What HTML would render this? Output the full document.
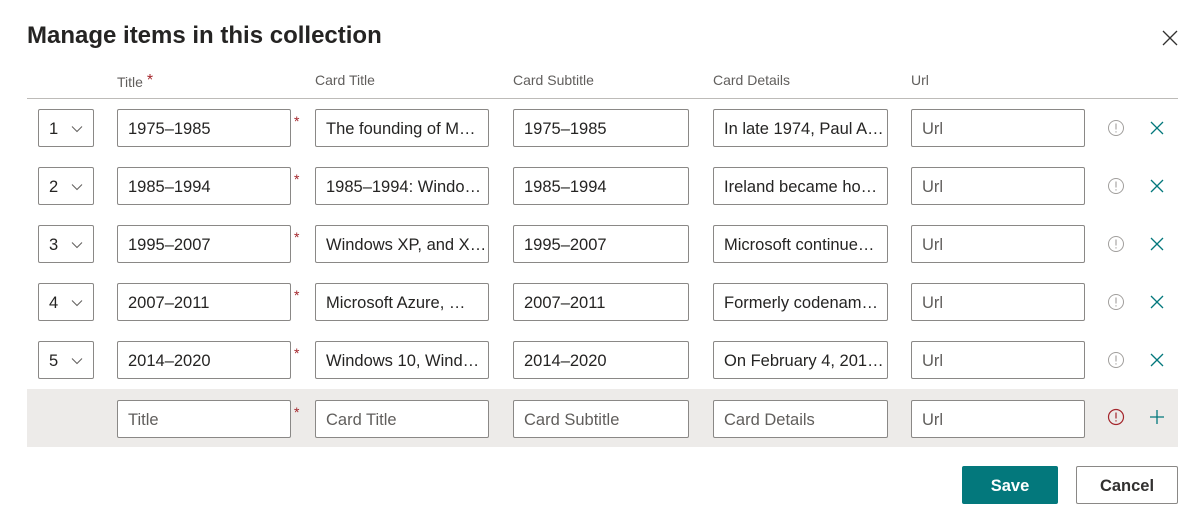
<!DOCTYPE html>
<html><head><style>
*{box-sizing:border-box;margin:0;padding:0}
body{width:1200px;height:523px;background:#fff;font-family:"Liberation Sans",sans-serif;color:#323130;position:relative;overflow:hidden}
.a{position:absolute}
h1{position:absolute;left:27px;top:22px;font-size:24px;font-weight:bold;color:#252423}
.hd{position:absolute;top:72px;font-size:14px;color:#605e5c}
.line{position:absolute;left:27px;width:1151px;top:98px;height:1px;background:#bdbbb8}
.in{position:absolute;height:38px;border:1px solid #8a8886;border-radius:2px;background:#fff;font-size:16.5px;line-height:39px;padding-left:10px;white-space:nowrap;overflow:hidden;padding-right:4px;color:#252423}
.in.ph{color:#605e5c}
.st{position:absolute;color:#a4262c;font-size:14px}
.band{position:absolute;left:27px;width:1151px;top:389px;height:58px;background:#edebe9}
.btn{position:absolute;top:466px;height:38px;font-size:16.5px;font-weight:bold;text-align:center;line-height:38px;border-radius:2px}
</style></head><body>
<h1>Manage items in this collection</h1>
<svg class="a" style="left:1162px;top:30px" width="16" height="16" viewBox="0 0 16 16"><path d="M1 1L15 15M15 1L1 15" stroke="#323130" stroke-width="1.3"/></svg>
<div class="hd" style="left:117px">Title <span style="color:#a4262c;font-size:16px;vertical-align:2px">*</span></div>
<div class="hd" style="left:315px">Card Title</div>
<div class="hd" style="left:513px">Card Subtitle</div>
<div class="hd" style="left:713px">Card Details</div>
<div class="hd" style="left:911px">Url</div>
<div class="line"></div>
<div class="band"></div>
<div id="rows"></div>
<script>
var d=[["1","1975–1985","The founding of M…","1975–1985","In late 1974, Paul A…"],
["2","1985–1994","1985–1994: Windo…","1985–1994","Ireland became ho…"],
["3","1995–2007","Windows XP, and X…","1995–2007","Microsoft continue…"],
["4","2007–2011","Microsoft Azure, …","2007–2011","Formerly codenam…"],
["5","2014–2020","Windows 10, Wind…","2014–2020","On February 4, 201…"]];
var h="";
function row(y,r,ph){
 if(r[0]) h+='<div class="in" style="left:38px;top:'+y+'px;width:56px">'+r[0]+'<svg style="position:absolute;left:32px;top:15px" width="12" height="8" viewBox="0 0 12 8"><path d="M1 1.5L6 6.5L11 1.5" fill="none" stroke="#605e5c" stroke-width="1"/></svg></div>';
 var xs=[[117,174],[315,174],[513,176],[713,175],[911,174]];
 for(var i=0;i<5;i++){var p=(ph||i==4)?' ph':'';h+='<div class="in'+p+'" style="left:'+xs[i][0]+'px;top:'+y+'px;width:'+xs[i][1]+'px">'+r[i+1]+'</div>';}
 h+='<div class="st" style="left:294px;top:'+(y+4)+'px">*</div>';
}
for(var k=0;k<5;k++){var y=109+58*k;row(y,d[k].concat(["Url"]),0);
 h+='<svg class="a" style="left:1107px;top:'+(y+10)+'px" width="18" height="18" viewBox="0 0 18 18"><circle cx="9" cy="9" r="7.5" fill="none" stroke="#a19f9d" stroke-width="1"/><path d="M9 4.5V10.5M9 12.3V13.5" stroke="#a19f9d" stroke-width="1.1"/></svg>';
 h+='<svg class="a" style="left:1150px;top:'+(y+12)+'px" width="14" height="14" viewBox="0 0 14 14"><path d="M1 1L13 13M13 1L1 13" stroke="#03787c" stroke-width="1.3"/></svg>';}
row(400,["","Title","Card Title","Card Subtitle","Card Details","Url"],1);
h+='<svg class="a" style="left:1107px;top:408px" width="18" height="18" viewBox="0 0 18 18"><circle cx="9" cy="9" r="7.5" fill="none" stroke="#a4262c" stroke-width="1.2"/><path d="M9 4.5V10.5M9 12.3V13.5" stroke="#a4262c" stroke-width="1.2"/></svg>';
h+='<svg class="a" style="left:1149px;top:409px" width="16" height="16" viewBox="0 0 16 16"><path d="M8 1V15M1 8H15" stroke="#03787c" stroke-width="1.3"/></svg>';
document.getElementById("rows").innerHTML=h;
</script>
<div class="btn" style="left:962px;width:96px;background:#03787c;color:#fff;border:1px solid #03787c">Save</div>
<div class="btn" style="left:1076px;width:102px;background:#fff;color:#323130;border:1px solid #8a8886">Cancel</div>
</body></html>
